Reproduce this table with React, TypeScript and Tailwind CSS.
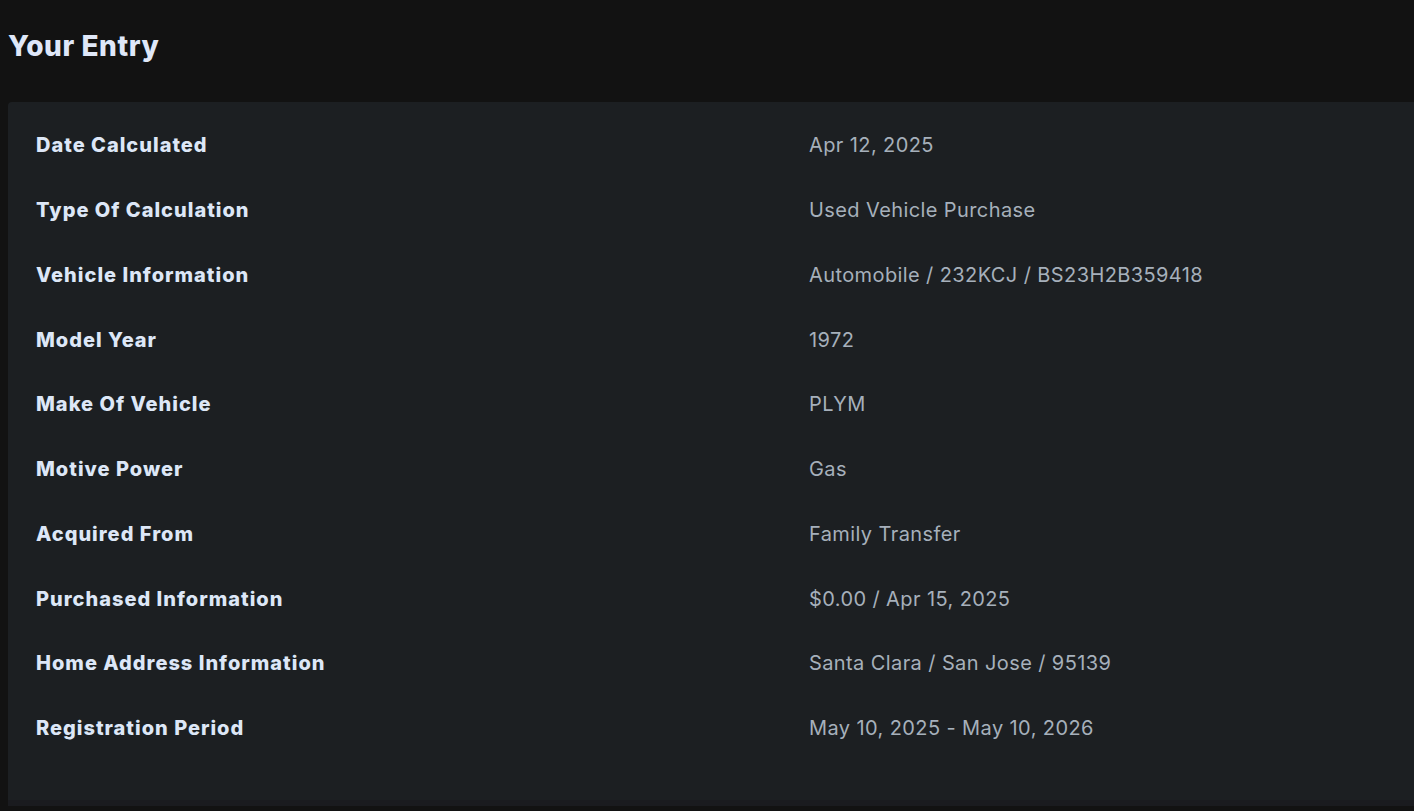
const rows: [string, string][] = [
    ['Date Calculated', 'Apr 12, 2025'],
    ['Type Of Calculation', 'Used Vehicle Purchase'],
    ['Vehicle Information', 'Automobile / 232KCJ / BS23H2B359418'],
    ['Model Year', '1972'],
    ['Make Of Vehicle', 'PLYM'],
    ['Motive Power', 'Gas'],
    ['Acquired From', 'Family Transfer'],
    ['Purchased Information', '$0.00 / Apr 15, 2025'],
    ['Home Address Information', 'Santa Clara / San Jose / 95139'],
    ['Registration Period', 'May 10, 2025 - May 10, 2026'],
];

export default function App() {
    return (
        <div className="h-[811px] overflow-hidden bg-[#121212] font-['Inter',sans-serif]">
            <div className="flex h-[102px] items-start pl-2 pt-[29px]">
                <h1 className="text-[28px] font-extrabold leading-[34px] tracking-[0.02em] text-[#dfe7f8]">Your Entry</h1>
            </div>
            <div className="ml-2 h-[704px] rounded-tl-sm border-b-[6px] border-[#1a1b1f] bg-[#1c1f22] pl-7 pt-[11px]">
                <div className="grid grid-cols-[773px_1fr]">
                    {rows.map(([label, value]) => (
                        <div key={label} className="contents">
                            <div className="flex h-[64.75px] items-center text-[20px] font-extrabold tracking-[0.05em] text-[#dde7f7]">{label}</div>
                            <div className="flex h-[64.75px] items-center text-[20px] tracking-[0.02em] text-[#a6b0bb]">{value}</div>
                        </div>
                    ))}
                </div>
            </div>
        </div>
    );
}
